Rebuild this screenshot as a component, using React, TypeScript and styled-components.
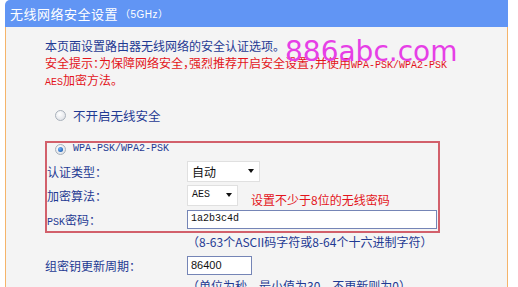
import React from 'react';
import styled, { createGlobalStyle } from 'styled-components';

const GlobalStyle = createGlobalStyle`
  html, body {
    margin: 0;
    padding: 0;
    background: #ffffff;
  }
  body {
    font-family: "Noto Sans CJK SC", "Liberation Sans", sans-serif;
    font-size: 12px;
  }
`;

const NAVY = '#1f3a93';
const RED = '#e3141b';

const Page = styled.div`
  padding-left: 5px;
  width: 518px;
  height: 287px;
  overflow: hidden;
  box-sizing: border-box;
  position: relative;
`;

const Panel = styled.div`
  width: 503px;
`;

const TitleBar = styled.div`
  height: 27px;
  background: #6195f4;
  border-top-left-radius: 5px;
  color: #ffffff;
  font-size: 13px;
  display: flex;
  align-items: center;
  padding-left: 5px;
  letter-spacing: 0.5px;
`;

const TitleSmall = styled.span`
  font-size: 10px;
  font-family: "Liberation Sans", "Noto Sans CJK SC", sans-serif;
  margin-left: 2px;
`;

const Body = styled.div`
  background: #f4f4f4;
  border-left: 1px solid #f5b46a;
  border-right: 1px solid #f5b46a;
  padding: 10px 0 20px 39px;
`;

const Line = styled.div<{ $warn?: boolean }>`
  height: 17px;
  line-height: 17px;
  white-space: nowrap;
  color: ${(p) => (p.$warn ? RED : NAVY)};
  font-feature-settings: "halt";
`;

const Mono = styled.span`
  font-family: "Liberation Mono", monospace;
  font-size: 10px;
  line-height: 1;
`;

const Watermark = styled.div`
  position: absolute;
  left: 285px;
  top: 37px;
  font-family: "DejaVu Sans", sans-serif;
  font-size: 28px;
  line-height: 30px;
  color: #e63fe6;
  pointer-events: none;
`;

const RadioRow = styled.div<{ $indent: number }>`
  display: flex;
  align-items: center;
  gap: 7px;
  padding-left: ${(p) => p.$indent}px;
  color: ${NAVY};
`;

const Radio = styled.span<{ $checked?: boolean }>`
  width: 11px;
  height: 11px;
  box-sizing: border-box;
  border-radius: 50%;
  border: 1px solid #a9b1bb;
  background: radial-gradient(circle at 40% 35%, #ffffff 0%, #e4e6ea 70%, #cfd3d8 100%);
  display: flex;
  align-items: center;
  justify-content: center;
  &::after {
    content: '';
    display: ${(p) => (p.$checked ? 'block' : 'none')};
    width: 5px;
    height: 5px;
    border-radius: 50%;
    background: radial-gradient(circle at 35% 35%, #6fb3ff 0%, #1f5fb0 80%);
  }
`;

const OffRow = styled(RadioRow)`
  height: 20px;
  margin-top: 17px;
  font-size: 12.5px;
`;

const SecBox = styled.div`
  width: 395px;
  box-sizing: border-box;
  margin-top: 16px;
  border: 2px solid #d2606b;
`;

const WpaRow = styled(RadioRow)`
  height: 12px;
  padding-bottom: 4px;
`;

const FieldRow = styled.div`
  display: flex;
  align-items: center;
  height: 24px;
`;

const Label = styled.div`
  width: 140px;
  flex: none;
  color: ${NAVY};
`;

const FakeSelect = styled.div<{ $w: number }>`
  width: ${(p) => p.$w}px;
  height: 21px;
  box-sizing: border-box;
  background: #ffffff;
  border: 1px solid #e0e0e0;
  display: flex;
  align-items: center;
  justify-content: space-between;
  padding: 0 5px 0 4px;
  color: #111111;
  &::after {
    content: '';
    border-left: 3px solid transparent;
    border-right: 3px solid transparent;
    border-top: 4px solid #111111;
  }
`;

const Hint = styled.div`
  color: ${RED};
  align-self: flex-end;
  line-height: 15px;
  margin-left: 13px;
`;

const TextInput = styled.div<{ $w: number }>`
  width: ${(p) => p.$w}px;
  height: 19px;
  box-sizing: border-box;
  background: #ffffff;
  border: 1px solid #7585b6;
  display: flex;
  align-items: center;
  padding-left: 3px;
  color: #111111;
`;

const PlainNum = styled.span`
  font-family: "Liberation Sans", sans-serif;
  font-size: 11px;
`;

const Note = styled.div`
  padding-left: 142px;
  height: 17px;
  line-height: 17px;
  white-space: nowrap;
  color: ${NAVY};
`;

const GroupRow = styled(FieldRow)`
  margin-top: 3px;
`;

const GroupLabel = styled(Label)`
  width: 142px;
`;

export default function App() {
  return (
    <>
      <GlobalStyle />
      <Page>
        <Panel>
          <TitleBar>
            无线网络安全设置<TitleSmall>（5GHz）</TitleSmall>
          </TitleBar>
          <Body>
            <Line>本页面设置路由器无线网络的安全认证选项。</Line>
            <Line $warn>
              安全提示：为保障网络安全，强烈推荐开启安全设置，并使用<Mono>WPA-PSK/WPA2-PSK</Mono>
            </Line>
            <Line $warn>
              <Mono>AES</Mono>加密方法。
            </Line>
            <OffRow $indent={10}>
              <Radio />
              不开启无线安全
            </OffRow>
            <SecBox>
              <WpaRow $indent={8}>
                <Radio $checked />
                <Mono>WPA-PSK/WPA2-PSK</Mono>
              </WpaRow>
              <FieldRow>
                <Label>认证类型：</Label>
                <FakeSelect $w={73}>自动</FakeSelect>
              </FieldRow>
              <FieldRow>
                <Label>加密算法：</Label>
                <FakeSelect $w={51}>
                  <Mono>AES</Mono>
                </FakeSelect>
                <Hint>设置不少于8位的无线密码</Hint>
              </FieldRow>
              <FieldRow>
                <Label>
                  <Mono>PSK</Mono>密码：
                </Label>
                <TextInput $w={250}>
                  <Mono>1a2b3c4d</Mono>
                </TextInput>
              </FieldRow>
            </SecBox>
            <Note>（8-63个ASCII码字符或8-64个十六进制字符）</Note>
            <GroupRow>
              <GroupLabel>组密钥更新周期：</GroupLabel>
              <TextInput $w={65}>
                <PlainNum>86400</PlainNum>
              </TextInput>
            </GroupRow>
            <Note>（单位为秒，最小值为30，不更新则为0）</Note>
          </Body>
        </Panel>
        <Watermark>886abc.com</Watermark>
      </Page>
    </>
  );
}
